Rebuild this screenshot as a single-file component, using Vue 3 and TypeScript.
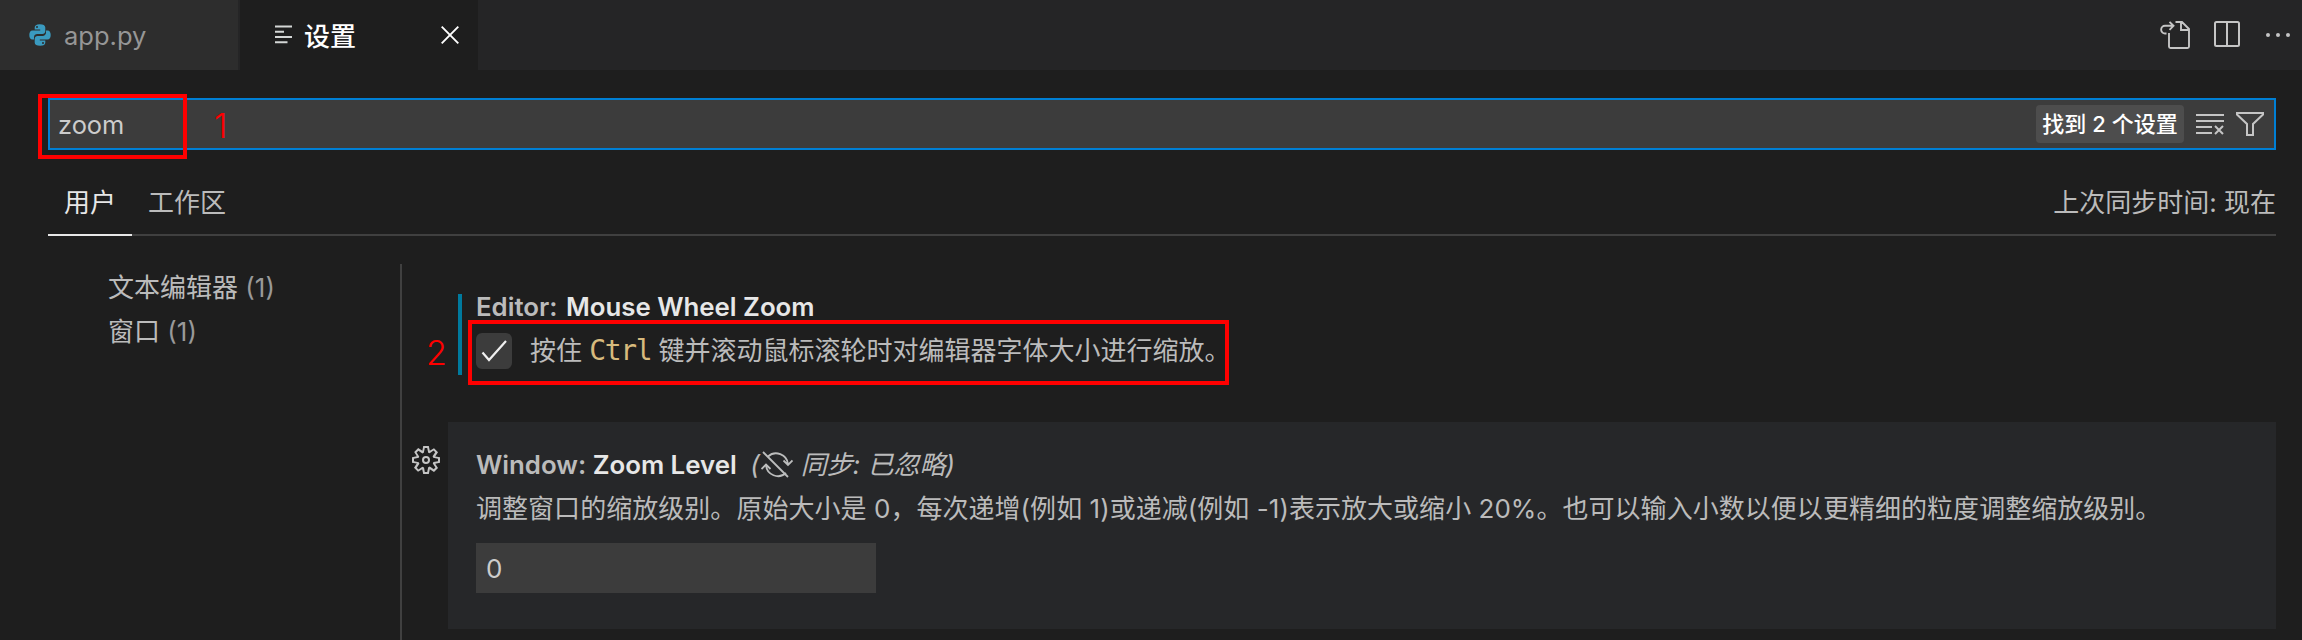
<script setup lang="ts">
interface TocEntry { label: string; count: number }
const toc: TocEntry[] = [
  { label: '文本编辑器', count: 1 },
  { label: '窗口', count: 1 },
]
</script>

<template>
  <div class="window">
    <header class="tabbar">
      <div class="tab idle">
        <svg class="py" viewBox="0 0 22 22" width="22" height="22">
          <g fill="#3a9abf">
            <path id="snake" d="M10.8 .3C7.2.3 5.7 1.6 5.7 3.6V5.6H11.2V6.4H3.6C1.4 6.4.3 8.2.3 11S1.4 15.6 3.4 15.6H5V13.2C5 11.2 6.6 10 8.3 10H13.5C15 10 16.3 8.8 16.3 7.3V3.6C16.3 1.5 14.3.3 10.8.3ZM8 2A1 1 0 1 1 8 4A1 1 0 1 1 8 2Z" fill-rule="evenodd" />
            <use href="#snake" transform="rotate(180 11 11)" />
          </g>
        </svg>
        <span class="name">app.py</span>
      </div>
      <div class="tab active">
        <svg class="list" viewBox="0 0 17 19" width="17" height="19" stroke="#d4d7d6" stroke-width="2">
          <path d="M0 1.5H17M0 6.8H9M0 12H17M0 17.3H12.5" />
        </svg>
        <span class="name">设置</span>
        <svg class="close" viewBox="0 0 18 18" width="18" height="18" stroke="#fff" stroke-width="1.9"><path d="M.7.7L17.3 17.3M17.3.7L.7 17.3" /></svg>
      </div>
      <div class="actions">
        <svg viewBox="0 0 32 32" width="32" height="32" fill="none" stroke="#c5c5c5" stroke-width="1.9">
          <path d="M15.5 3H22L29 10V27.5Q29 29 27.5 29H10.5Q9 29 9 27.5V14M21 3V11H29M6.5 14.5H5A3.85 3.85 0 0 1 5 6.8H13.5M9.5 2.8L13.5 6.8L9.5 10.8" />
        </svg>
        <svg viewBox="0 0 32 32" width="32" height="32" fill="none" stroke="#c5c5c5" stroke-width="2"><rect x="4" y="3" width="24" height="24" rx="1.5" /><path d="M16 3V27" /></svg>
        <svg viewBox="0 0 32 32" width="32" height="32" fill="#c5c5c5"><circle cx="6" cy="16" r="2" /><circle cx="16" cy="16" r="2" /><circle cx="26" cy="16" r="2" /></svg>
      </div>
    </header>

    <main class="editor">
      <div class="search">
        <span class="query">zoom</span>
        <div class="controls">
          <span class="badge">找到 2 个设置</span>
          <svg class="clear" viewBox="0 0 28 22" width="28" height="22" fill="none" stroke="#c5c5c5" stroke-width="2"><path d="M0 2H28M0 8H28M0 14H16M0 20H16M19 13L27 21M27 13L19 21" /></svg>
          <svg class="filter" viewBox="0 0 28 26" width="28" height="26" fill="none" stroke="#c5c5c5" stroke-width="2"><path d="M1 2H27V3.5L17 13V24H11V13L1 3.5Z" /></svg>
        </div>
        <div class="mark mark-search"></div>
        <span class="digit digit-one">1</span>
      </div>

      <nav class="scopes">
        <span class="scope on">用户</span>
        <span class="scope">工作区</span>
        <span class="sync">上次同步时间: 现在</span>
      </nav>

      <div class="body">
        <aside class="toc">
          <div v-for="t in toc" :key="t.label" class="toc-row">{{ t.label }} <span class="count">({{ t.count }})</span></div>
        </aside>
        <section class="settings">
          <article class="setting first">
            <h2 class="title"><span class="cat">Editor: </span>Mouse Wheel Zoom</h2>
            <div class="check-row">
              <span class="checkbox">
                <svg viewBox="0 0 36 36" width="36" height="36" fill="none" stroke="#f0f0f0" stroke-width="2.2"><path d="M6.5 19.5L13 27L30 8" /></svg>
              </span>
              <span class="check-text">按住 <code>Ctrl</code> 键并滚动鼠标滚轮时对编辑器字体大小进行缩放。</span>
            </div>
            <div class="mark mark-check"></div>
            <span class="digit digit-two">2</span>
          </article>
          <article class="setting second">
            <svg class="gear" viewBox="0 0 16 16" width="32" height="32" fill="#c5c5c5">
              <path fill-rule="evenodd" d="M9.1 4.4L8.6 2H7.4l-.5 2.4-.7.3-2-1.3-.9.8 1.3 2-.2.7-2.4.5v1.2l2.4.5.3.8-1.3 2 .8.8 2-1.3.8.3.4 2.3h1.2l.5-2.4.8-.3 2 1.3.8-.8-1.3-2 .3-.8 2.3-.4V7.4l-2.4-.5-.3-.8 1.3-2-.8-.8-2 1.3-.7-.2zM9.4 1l.5 2.4L12 2.1l2 2-1.4 2.1 2.4.4v2.8l-2.4.5L14 12l-2 2-2.1-1.4-.5 2.4H6.6l-.5-2.4L4 13.9l-2-2 1.4-2.1L1 9.4V6.6l2.4-.5L2.1 4l2-2 2.1 1.4.4-2.4h2.8z" />
              <circle cx="8" cy="8" r="1.5" fill="none" stroke="#c5c5c5" />
            </svg>
            <h2 class="title"><span class="cat">Window: </span>Zoom Level
              <span class="ignored">(<svg class="syncicon" viewBox="0 0 32 28" width="32" height="28" fill="none" stroke="#bcbdbd" stroke-width="1.8"><path d="M7 5.5A12 12 0 0 1 27 13M22.5 9.5L27 14L31.5 9.5M25 22A12 12 0 0 1 5 14M.5 18L5 13.5L9.5 18M2 1L27 26" /></svg><span class="slant">同步: 已忽略)</span></span>
            </h2>
            <p class="desc">调整窗口的缩放级别。原始大小是 0，每次递增(例如 1)或递减(例如 -1)表示放大或缩小 20%。也可以输入小数以便以更精细的粒度调整缩放级别。</p>
            <div class="number">0</div>
          </article>
        </section>
      </div>
    </main>
  </div>
</template>

<style>
html, body { margin: 0; background: #1e1e1e; overflow: hidden; }
</style>

<style scoped>
.window { width: 2302px; height: 640px; overflow: hidden; background: #1e1e1e; color: #bbb; font-family: Inter, "Noto Sans CJK SC", sans-serif; font-size: 26px; box-sizing: border-box; }
.window * { box-sizing: border-box; }
svg { display: block; flex: none; }
.tabbar { height: 70px; background: #252526; display: flex; }
.tab { height: 70px; display: flex; align-items: center; }
.idle { width: 240px; background: #2d2d2d; border-right: 2px solid #252526; padding-left: 29px; color: #969696; }
.idle .name { margin-left: 13px; font-size: 25.5px; }
.active { width: 238px; background: #1e1e1e; color: #fff; padding: 0 19px 0 35px; }
.active .name { margin-left: 12px; font-weight: 500; padding-bottom: 2px; }
.close { margin-left: auto; }
.py, .list { margin-bottom: 1px; }
.actions { margin-left: auto; display: flex; gap: 19px; align-items: center; padding-right: 8px; }
.editor { padding: 28px 26px 0 48px; }
.search { position: relative; height: 52px; border: 2px solid #007fd4; background: #3c3c3c; display: flex; align-items: center; justify-content: space-between; color: #ccc; padding: 0 10px 0 8px; }
.query { font-size: 25.4px; padding-top: 1px; }
.controls { display: flex; align-items: center; }
.badge { width: 148px; height: 38px; line-height: 38px; border-radius: 4px; background: #4d4d4d; color: #fff; font-size: 22px; font-weight: 500; text-align: center; white-space: nowrap; }
.clear { margin-left: 12px; }
.filter { margin-left: 12px; }
.mark { position: absolute; border: 4px solid #f00; }
.mark-search { left: -12px; top: -6px; width: 149px; height: 65px; }
.digit { position: absolute; color: #f00; font-size: 34px; line-height: 40px; font-weight: 350; }
.digit-one { left: 164px; top: 6px; }
.scopes { height: 86px; border-bottom: 2px solid #404040; display: flex; align-items: flex-end; }
.scope { height: 66px; line-height: 66px; padding: 0 16px; margin-bottom: -2px; }
.scope.on { width: 84px; color: #e7e7e7; border-bottom: 2px solid #e7e7e7; }
.sync { margin-left: auto; line-height: 66px; height: 66px; margin-bottom: -2px; }
.body { display: flex; }
.toc { width: 354px; height: 376px; margin-top: 28px; border-right: 2px solid #404040; padding: 2px 0 0 60px; }
.toc-row { height: 44px; line-height: 44px; }
.count { color: #999; }
.settings { flex: 1; padding: 58px 0 0 46px; }
.setting { position: relative; }
.first { height: 81px; margin-left: 10px; border-left: 4px solid #007a9e; padding-left: 14px; }
.title { margin: 0; height: 28px; line-height: 28px; font-size: 25.8px; font-weight: 600; color: #e7e7e7; display: flex; white-space: pre; }
.first .title { height: 27px; line-height: 26px; }
.first .cat { margin-right: 2px; }
.cat { color: #bbb; }
.check-row { display: flex; align-items: center; height: 36px; margin-top: 12px; }
.checkbox { width: 36px; height: 36px; border-radius: 6px; background: #3c3c3c; }
.check-text { margin-left: 18px; white-space: pre; line-height: 36px; height: 36px; padding-bottom: 1px; }
code { font-family: "DejaVu Sans Mono", monospace; font-size: 28px; letter-spacing: -1.4px; line-height: 1; color: #d7ba7d; }
.mark-check { left: 6px; top: 26px; width: 761px; height: 65px; }
.digit-two { left: -36px; top: 39px; }
.second { margin-top: 47px; height: 207px; background: #262729; padding: 29px 28px; }
.gear { position: absolute; left: -38px; top: 22px; }
.ignored { display: flex; align-items: center; font-weight: 400; font-style: italic; font-size: 26px; color: #bbb; margin-left: 7px; }
.syncicon { margin: 0 8px 0 1px; }
.desc { margin: 15px 0 0; height: 30px; line-height: 30px; letter-spacing: 0.04px; white-space: nowrap; }
.number { margin-top: 19px; width: 400px; height: 50px; line-height: 52px; background: #3c3c3c; color: #ccc; padding-left: 10px; }
</style>
